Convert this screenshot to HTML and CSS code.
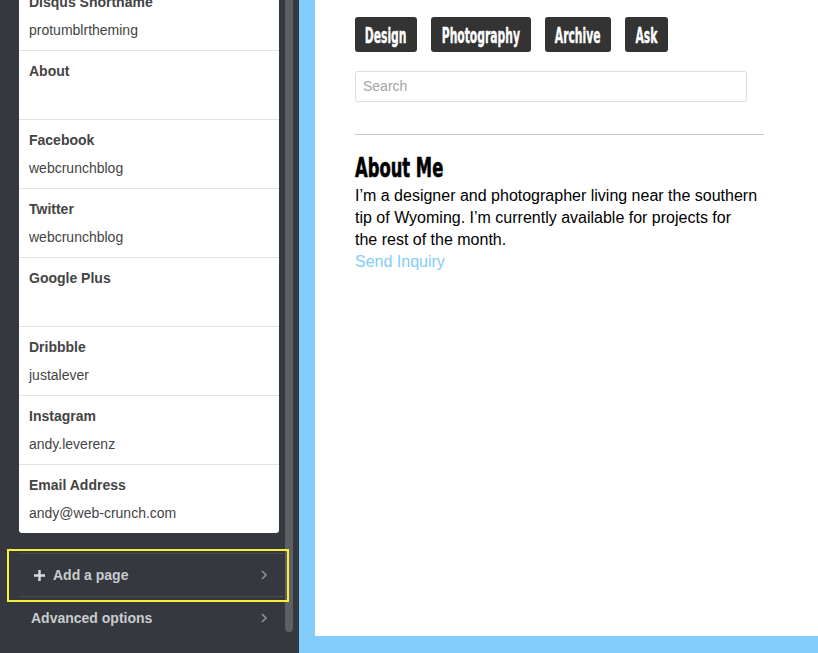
FILE: index.html
```html
<!DOCTYPE html>
<html>
<head>
<meta charset="utf-8">
<link rel="stylesheet" href="styles.css">
</head>
<body>
<div class="app">
  <aside class="sidebar">
    <div class="panel">
      <div class="field"><div class="label">Disqus Shortname</div><div class="value">protumblrtheming</div></div>
      <div class="field"><div class="label">About</div><div class="value"></div></div>
      <div class="field"><div class="label">Facebook</div><div class="value">webcrunchblog</div></div>
      <div class="field"><div class="label">Twitter</div><div class="value">webcrunchblog</div></div>
      <div class="field"><div class="label">Google Plus</div><div class="value"></div></div>
      <div class="field"><div class="label">Dribbble</div><div class="value">justalever</div></div>
      <div class="field"><div class="label">Instagram</div><div class="value">andy.leverenz</div></div>
      <div class="field"><div class="label">Email Address</div><div class="value">andy@web-crunch.com</div></div>
    </div>
    <div class="add-wrap">
      <div class="menu-row add-row">
        <svg class="plus" width="11" height="11" viewBox="0 0 11 11"><path d="M5.5 0 V11 M0 5.5 H11" stroke="#d9dbdd" stroke-width="2.4"/></svg>
        <span class="menu-text">Add a page</span>
        <svg class="chev" width="8" height="12" viewBox="0 0 8 12"><path d="M2 2 L6 6 L2 10" fill="none" stroke="#8d9096" stroke-width="1.6"/></svg>
      </div>
    </div>
    <div class="menu-row adv-row">
      <span class="menu-text">Advanced options</span>
      <svg class="chev" width="8" height="12" viewBox="0 0 8 12"><path d="M2 2 L6 6 L2 10" fill="none" stroke="#8d9096" stroke-width="1.6"/></svg>
    </div>
    <div class="scrollbar"></div>
  </aside>
  <main class="preview">
    <div class="page">
      <nav class="nav">
        <a class="nav-btn nav-design"><span class="cond">Design</span></a>
        <a class="nav-btn nav-photo"><span class="cond">Photography</span></a>
        <a class="nav-btn nav-archive"><span class="cond">Archive</span></a>
        <a class="nav-btn nav-ask"><span class="cond">Ask</span></a>
      </nav>
      <div class="search">Search</div>
      <hr class="rule">
      <h2 class="about-title"><span class="cond-title">About Me</span></h2>
      <p class="about-text">I’m a designer and photographer living near the southern tip of Wyoming. I’m currently available for projects for <span class="nobr">the rest</span> of the month.</p>
      <a class="inquiry">Send Inquiry</a>
    </div>
  </main>
</div>
</body>
</html>
```

FILE: styles.css
```css
html, body {
  margin: 0;
  padding: 0;
  height: 653px;
  overflow: hidden;
}
.app {
  display: flex;
  width: 818px;
  height: 653px;
}
.sidebar {
  position: relative;
  width: 299px;
  flex: 0 0 299px;
  background: #35393f;
  overflow: hidden;
  font-family: "Liberation Sans", Arial, sans-serif;
}
.panel {
  margin: -19px 0 0 19px;
  width: 260px;
  background: #fff;
  border-radius: 0 0 3px 3px;
}
.field {
  border-top: 1px solid #e3e3e3;
  padding: 11px 10px 11px;
}
.field:first-child {
  border-top: 1px solid transparent;
}
.label {
  font-size: 14px;
  font-weight: bold;
  line-height: 18px;
  color: #444;
}
.value {
  margin-top: 10px;
  font-size: 14px;
  line-height: 18px;
  min-height: 18px;
  color: #444;
}
.add-wrap {
  position: relative;
  z-index: 2;
  margin: 16px 0 0 7px;
  width: 268px;
  border: 2px solid #f6f03c;
  padding: 2px 0 3px 10px;
}
.menu-row {
  display: flex;
  align-items: center;
  color: #c9cbce;
  font-size: 14px;
  font-weight: bold;
}
.add-row {
  height: 42px;
  border-top: 1px solid #4a4e54;
  border-bottom: 1px solid #4a4e54;
  padding-left: 15px;
}
.plus {
  margin-right: 8px;
  flex: 0 0 auto;
}
.menu-text {
  flex: 1;
}
.chev {
  flex: 0 0 auto;
  margin-right: 19px;
}
.adv-row {
  height: 32px;
  padding-left: 31px;
  width: 268px;
  box-sizing: border-box;
}
.adv-row .chev {
  margin-right: 0;
}
.scrollbar {
  position: absolute;
  z-index: 1;
  left: 285px;
  top: 0;
  width: 8px;
  height: 632px;
  border-radius: 0 0 4px 4px;
  background: #5d6166;
}
.preview {
  flex: 1;
  background: #83cdfc;
  padding: 0 0 17px 16px;
  box-sizing: border-box;
  height: 653px;
}
.page {
  background: #fff;
  height: 100%;
  padding: 17px 0 0 40px;
  box-sizing: border-box;
  font-family: "Liberation Sans", Arial, sans-serif;
}
.nav {
  display: flex;
  gap: 14px;
}
.nav-btn {
  display: flex;
  justify-content: center;
  align-items: center;
  height: 35px;
  background: #333;
  color: #fff;
  border-radius: 3px;
  white-space: nowrap;
}
.nav-design { width: 62px; }
.nav-photo { width: 100px; }
.nav-archive { width: 66px; }
.nav-ask { width: 43px; }
.cond {
  display: inline-block;
  font-family: "DejaVu Sans", sans-serif;
  font-weight: bold;
  font-size: 22px;
  line-height: 24px;
  transform: scaleX(0.49);
  position: relative;
  top: 1px;
  -webkit-text-stroke: 0.4px #fff;
}
.search {
  margin-top: 19px;
  height: 31px;
  border: 1px solid #dcdcdc;
  border-radius: 3px;
  box-sizing: border-box;
  width: 392px;
  padding-left: 7px;
  font-size: 14px;
  line-height: 29px;
  color: #a5a5a5;
}
.rule {
  margin: 32px 0 0;
  width: 409px;
  border: 0;
  border-top: 1px solid #c8c8c8;
}
.about-title {
  margin: 19px 0 0;
  height: 28px;
  font-weight: bold;
  color: #000;
  white-space: nowrap;
}
.cond-title {
  display: inline-block;
  font-family: "DejaVu Sans", sans-serif;
  font-size: 26px;
  line-height: 28px;
  transform: scaleX(0.63);
  transform-origin: 0 50%;
  -webkit-text-stroke: 0.6px #000;
}
.about-text {
  margin: 3px 0 0;
  width: 406px;
  font-size: 16px;
  line-height: 22px;
  color: #000;
}
.nobr {
  white-space: nowrap;
}
.inquiry {
  display: block;
  font-size: 16px;
  line-height: 22px;
  color: #82ccfa;
}
```
